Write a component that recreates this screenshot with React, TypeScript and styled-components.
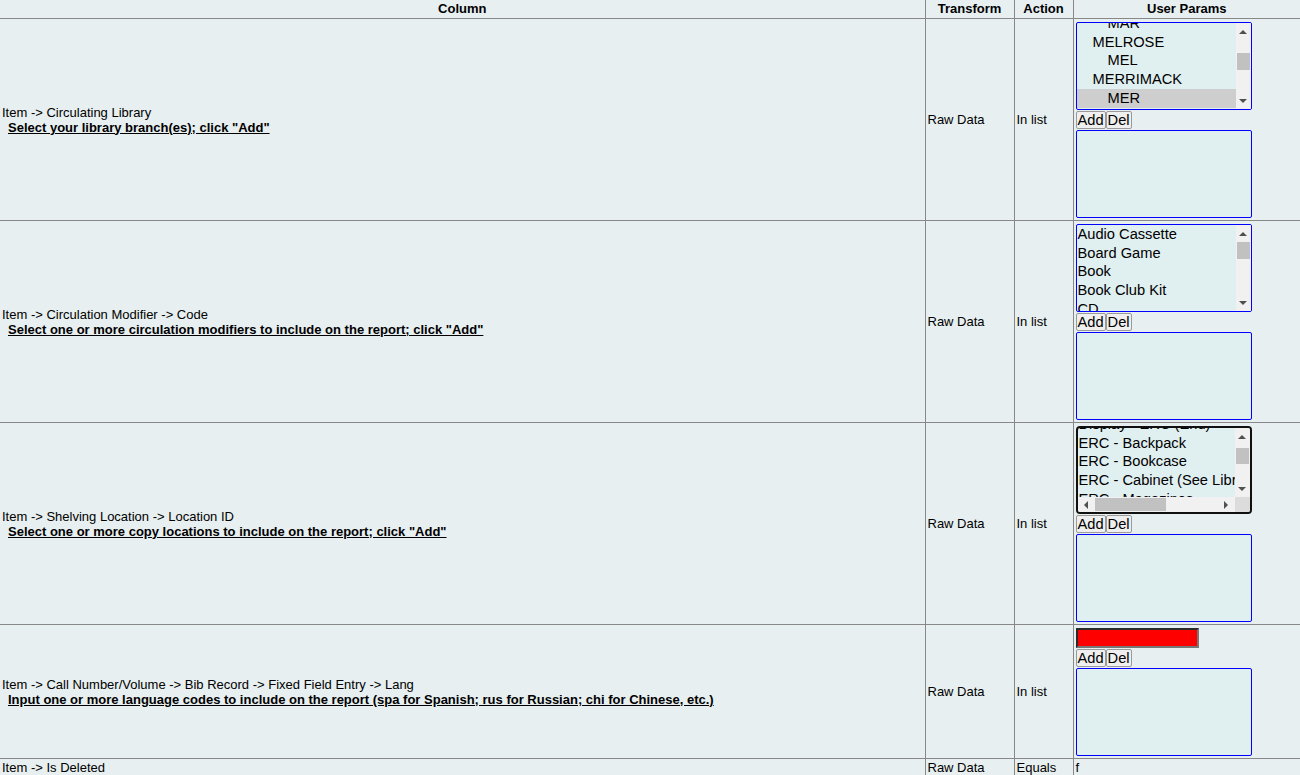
import { useLayoutEffect, useRef, useState } from "react";
import styled, { createGlobalStyle } from "styled-components";

const GlobalStyle = createGlobalStyle`
  html, body {
    margin: 0;
    padding: 0;
    background: #e7eff0;
    font-family: Arial, "Liberation Sans", sans-serif;
    color: #000;
    overflow: hidden;
  }
`;

const ROW_H = 18.7;
const BTN = 17;
const BAR = 15;

const Table = styled.table`
  width: 1300px;
  border-collapse: collapse;
  table-layout: fixed;
  border-style: hidden;
`;

const HeadCell = styled.th<{ $w: number }>`
  box-sizing: border-box;
  width: ${(p) => p.$w}px;
  font-size: 13px;
  font-weight: bold;
  text-align: center;
  padding: 1px 2px 2px;
  border: 1px solid #888;
  line-height: 15px;
`;

const Cell = styled.td`
  font-size: 13px;
  line-height: 15px;
  padding: 1px 2px;
  border: 1px solid #888;
  vertical-align: middle;
  white-space: nowrap;
  overflow: hidden;
`;

const ParamCell = styled(Cell)`
  padding: 3px 2px 2px 2px;
`;

const Desc = styled.div`
  font-weight: bold;
  text-decoration: underline;
  padding-left: 6px;
`;

const ParamStack = styled.div`
  display: flex;
  flex-direction: column;
  align-items: flex-start;
  gap: 1px;
`;

const ListBox = styled.div<{ $focused?: boolean }>`
  box-sizing: border-box;
  width: 176px;
  height: 88px;
  display: grid;
  grid-template-columns: minmax(0, 1fr) auto;
  grid-template-rows: minmax(0, 1fr) auto;
  background: #e0eff0;
  border: ${(p) => (p.$focused ? "2px solid #101010" : "1px solid #0000ff")};
  border-radius: ${(p) => (p.$focused ? "4px" : "2px")};
  overflow: hidden;
  font-size: 14.67px;
  cursor: default;
`;

const Viewport = styled.div`
  overflow: hidden;
  min-width: 0;
  min-height: 0;
`;

const OptionList = styled.div`
  width: max-content;
  min-width: 100%;
`;

const Opt = styled.div<{ $depth?: number; $selected?: boolean }>`
  height: ${ROW_H}px;
  line-height: ${ROW_H}px;
  padding: 0 2px 0 ${(p) => 1 + (p.$depth || 0) * 15}px;
  white-space: nowrap;
  background: ${(p) => (p.$selected ? "#cecece" : "transparent")};
`;

const Bar = styled.div<{ $vertical: boolean }>`
  display: flex;
  flex-direction: ${(p) => (p.$vertical ? "column" : "row")};
  width: ${(p) => (p.$vertical ? `${BAR}px` : "auto")};
  height: ${(p) => (p.$vertical ? "auto" : `${BAR}px`)};
  background: #f1f1f1;
`;

const ArrowBtn = styled.div<{ $vertical: boolean }>`
  flex: none;
  display: flex;
  align-items: center;
  justify-content: center;
  width: ${(p) => (p.$vertical ? BAR : BTN)}px;
  height: ${(p) => (p.$vertical ? BTN : BAR)}px;
  color: #505050;
`;

const Track = styled.div<{ $vertical: boolean }>`
  flex: 1;
  display: flex;
  flex-direction: ${(p) => (p.$vertical ? "column" : "row")};
  padding: ${(p) => (p.$vertical ? "0 1px" : "1px 0")};
`;

const Thumb = styled.div`
  flex: none;
  background: #c1c1c1;
`;

const Corner = styled.div`
  width: ${BAR}px;
  height: ${BAR}px;
  background: #dcdcdc;
`;

const ButtonRow = styled.div`
  display: flex;
`;

const SmallButton = styled.button`
  box-sizing: border-box;
  height: 18px;
  margin: 0;
  padding: 0 1px;
  font-family: Arial, "Liberation Sans", sans-serif;
  font-size: 14.67px;
  line-height: 14px;
  color: #000;
  background: #efefef;
  border: 1px solid #9a9a9a;
  border-radius: 2px;
`;

const RedInput = styled.input`
  box-sizing: border-box;
  width: 123px;
  height: 20px;
  margin: 0;
  background: #ff0000;
  border-style: solid;
  border-width: 2px;
  border-color: #2a2a2a #777 #777 #2a2a2a;
`;

type Option = { label: string; depth?: number };

const libraries: Option[] = [
  { label: "LYNNFIELD", depth: 1 },
  { label: "LYN", depth: 2 },
  { label: "MARBLEHEAD", depth: 1 },
  { label: "MAR", depth: 2 },
  { label: "MELROSE", depth: 1 },
  { label: "MEL", depth: 2 },
  { label: "MERRIMACK", depth: 1 },
  { label: "MER", depth: 2 },
  { label: "METHUEN", depth: 1 },
  { label: "MET", depth: 2 },
  { label: "MIDDLETON", depth: 1 },
  { label: "MID", depth: 2 },
  { label: "NAHANT", depth: 1 },
  { label: "NAH", depth: 2 },
];

const modifiers: Option[] = [
  "Audio Cassette",
  "Board Game",
  "Book",
  "Book Club Kit",
  "CD",
  "DVD",
  "E-Reader",
  "Equipment",
  "Kit",
  "Large Print",
  "Magazine",
  "Museum Pass",
  "Reference",
  "Video Game",
].map((label) => ({ label }));

const locations: Option[] = [
  "Display - ERC (End)",
  "ERC - Backpack",
  "ERC - Bookcase",
  "ERC - Cabinet (See Library Staff for Key)",
  "ERC - Magazines",
  "ERC - Oversize",
  "ERC - Periodicals",
  "ERC - Shelf",
].map((label) => ({ label }));

type Dir = "up" | "down" | "left" | "right";

const arrowPoints: Record<Dir, string> = {
  up: "0,4 4,0 8,4",
  down: "0,0 8,0 4,4",
  left: "4,0 4,8 0,4",
  right: "0,0 0,8 4,4",
};

function Arrow({ dir }: { dir: Dir }) {
  const flat = dir === "up" || dir === "down";
  return (
    <svg width={flat ? 8 : 4} height={flat ? 4 : 8} viewBox={flat ? "0 0 8 4" : "0 0 4 8"}>
      <polygon points={arrowPoints[dir]} fill="currentColor" />
    </svg>
  );
}

interface ScrollBarProps {
  vertical: boolean;
  length: number;
  content: number;
  pos: number;
}

function ScrollBar({ vertical, length, content, pos }: ScrollBarProps) {
  const track = Math.max(0, length - 2 * BTN);
  const thumb = Math.max(10, Math.round((track * length) / content));
  const free = Math.max(0, track - thumb);
  const offset = content > length ? Math.round((free * pos) / (content - length)) : 0;
  const size = vertical
    ? { height: thumb, marginTop: offset }
    : { width: thumb, marginLeft: offset };

  return (
    <Bar $vertical={vertical}>
      <ArrowBtn $vertical={vertical}>
        <Arrow dir={vertical ? "up" : "left"} />
      </ArrowBtn>
      <Track $vertical={vertical}>
        <Thumb style={size} />
      </Track>
      <ArrowBtn $vertical={vertical}>
        <Arrow dir={vertical ? "down" : "right"} />
      </ArrowBtn>
    </Bar>
  );
}

interface PickerProps {
  options?: Option[];
  selected?: string;
  scrollTop?: number;
  focused?: boolean;
}

type Metrics = { sh: number; ch: number; sw: number; cw: number; st: number };

function Picker({ options = [], selected, scrollTop = 0, focused }: PickerProps) {
  const viewRef = useRef<HTMLDivElement>(null);
  const [m, setM] = useState<Metrics>({ sh: 0, ch: 0, sw: 0, cw: 0, st: 0 });

  const showV = options.length * ROW_H > 86;
  const showH = m.sw > m.cw + 1;

  useLayoutEffect(() => {
    const v = viewRef.current;
    if (!v) return;
    v.scrollTop = scrollTop;
    const next = {
      sh: v.scrollHeight,
      ch: v.clientHeight,
      sw: v.scrollWidth,
      cw: v.clientWidth,
      st: v.scrollTop,
    };
    setM((prev) =>
      prev.sh === next.sh &&
      prev.ch === next.ch &&
      prev.sw === next.sw &&
      prev.cw === next.cw &&
      prev.st === next.st
        ? prev
        : next
    );
  });

  return (
    <ListBox role="listbox" aria-multiselectable $focused={focused}>
      <Viewport ref={viewRef}>
        <OptionList>
          {options.map((o) => (
            <Opt
              key={o.label}
              role="option"
              $depth={o.depth}
              $selected={o.label === selected}
            >
              {o.label}
            </Opt>
          ))}
        </OptionList>
      </Viewport>
      {showV && <ScrollBar vertical length={m.ch} content={m.sh} pos={m.st} />}
      {showH && <ScrollBar vertical={false} length={m.cw} content={m.sw} pos={0} />}
      {showH && showV && <Corner />}
    </ListBox>
  );
}

function AddDel() {
  return (
    <ButtonRow>
      <SmallButton>Add</SmallButton>
      <SmallButton>Del</SmallButton>
    </ButtonRow>
  );
}

interface FilterRowProps {
  path: string;
  hint: string;
  children: React.ReactNode;
}

function FilterRow({ path, hint, children }: FilterRowProps) {
  return (
    <tr>
      <Cell>
        <div>{path}</div>
        <Desc>{hint}</Desc>
      </Cell>
      <Cell>Raw Data</Cell>
      <Cell>In list</Cell>
      <ParamCell>
        <ParamStack>
          {children}
          <AddDel />
          <Picker />
        </ParamStack>
      </ParamCell>
    </tr>
  );
}

export default function App() {
  return (
    <>
      <GlobalStyle />
      <Table>
        <thead>
          <tr>
            <HeadCell $w={925}>Column</HeadCell>
            <HeadCell $w={89}>Transform</HeadCell>
            <HeadCell $w={59}>Action</HeadCell>
            <HeadCell $w={227}>User Params</HeadCell>
          </tr>
        </thead>
        <tbody>
          <FilterRow
            path="Item -> Circulating Library"
            hint={'Select your library branch(es); click "Add"'}
          >
            <Picker options={libraries} selected="MER" scrollTop={3 * ROW_H + 9} />
          </FilterRow>
          <FilterRow
            path="Item -> Circulation Modifier -> Code"
            hint={'Select one or more circulation modifiers to include on the report; click "Add"'}
          >
            <Picker options={modifiers} />
          </FilterRow>
          <FilterRow
            path="Item -> Shelving Location -> Location ID"
            hint={'Select one or more copy locations to include on the report; click "Add"'}
          >
            <Picker options={locations} scrollTop={13} focused />
          </FilterRow>
          <FilterRow
            path="Item -> Call Number/Volume -> Bib Record -> Fixed Field Entry -> Lang"
            hint="Input one or more language codes to include on the report (spa for Spanish; rus for Russian; chi for Chinese, etc.)"
          >
            <RedInput type="text" />
          </FilterRow>
          <tr>
            <Cell>Item -&gt; Is Deleted</Cell>
            <Cell>Raw Data</Cell>
            <Cell>Equals</Cell>
            <Cell>f</Cell>
          </tr>
        </tbody>
      </Table>
    </>
  );
}
